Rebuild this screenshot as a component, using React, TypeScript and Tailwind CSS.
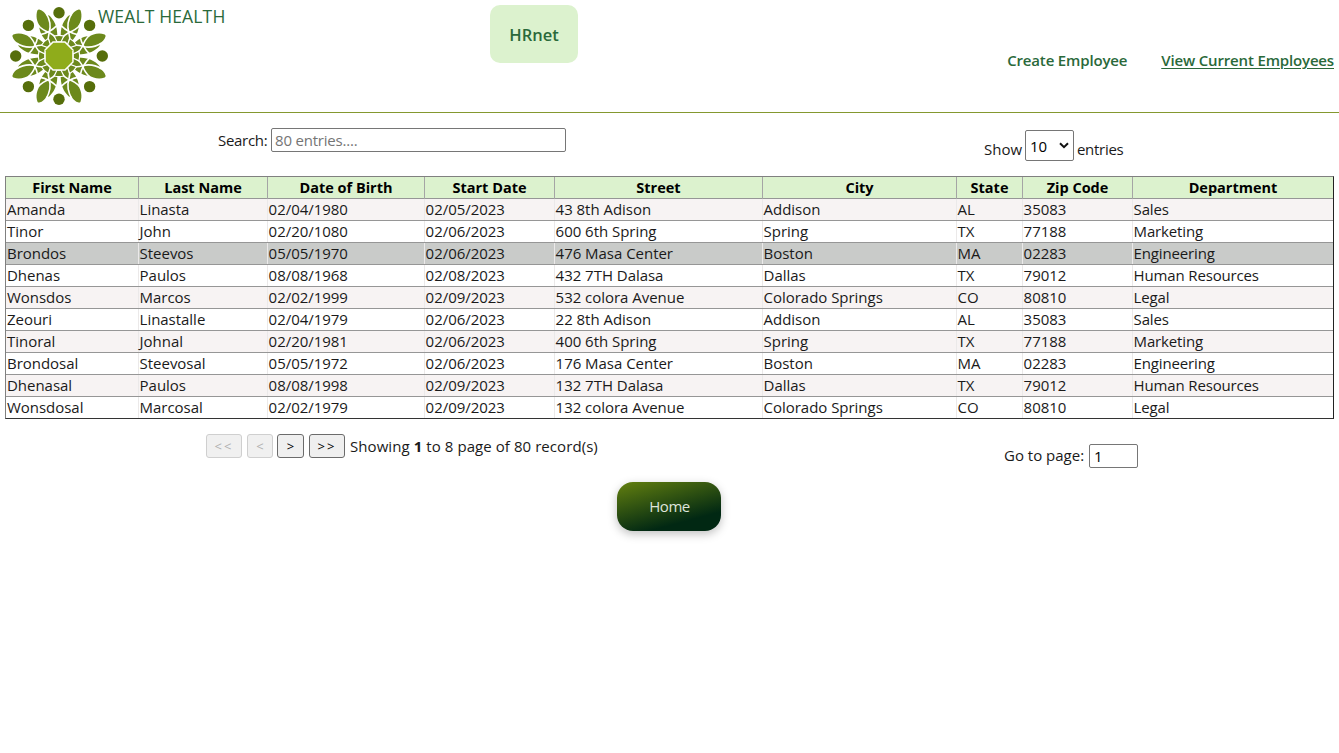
import React from 'react';

const columns = [
  'First Name',
  'Last Name',
  'Date of Birth',
  'Start Date',
  'Street',
  'City',
  'State',
  'Zip Code',
  'Department',
];

const employees = [
  ['Amanda', 'Linasta', '02/04/1980', '02/05/2023', '43 8th Adison', 'Addison', 'AL', '35083', 'Sales'],
  ['Tinor', 'John', '02/20/1080', '02/06/2023', '600 6th Spring', 'Spring', 'TX', '77188', 'Marketing'],
  ['Brondos', 'Steevos', '05/05/1970', '02/06/2023', '476 Masa Center', 'Boston', 'MA', '02283', 'Engineering'],
  ['Dhenas', 'Paulos', '08/08/1968', '02/08/2023', '432 7TH Dalasa', 'Dallas', 'TX', '79012', 'Human Resources'],
  ['Wonsdos', 'Marcos', '02/02/1999', '02/09/2023', '532 colora Avenue', 'Colorado Springs', 'CO', '80810', 'Legal'],
  ['Zeouri', 'Linastalle', '02/04/1979', '02/06/2023', '22 8th Adison', 'Addison', 'AL', '35083', 'Sales'],
  ['Tinoral', 'Johnal', '02/20/1981', '02/06/2023', '400 6th Spring', 'Spring', 'TX', '77188', 'Marketing'],
  ['Brondosal', 'Steevosal', '05/05/1972', '02/06/2023', '176 Masa Center', 'Boston', 'MA', '02283', 'Engineering'],
  ['Dhenasal', 'Paulos', '08/08/1998', '02/09/2023', '132 7TH Dalasa', 'Dallas', 'TX', '79012', 'Human Resources'],
  ['Wonsdosal', 'Marcosal', '02/02/1979', '02/09/2023', '132 colora Avenue', 'Colorado Springs', 'CO', '80810', 'Legal'],
];

const gridCols = 'grid grid-cols-[133px_129px_157px_130px_208px_194px_66px_110px_200px]';

const turns = [0, 45, 90, 135, 180, 225, 270, 315];

function Logo() {
  return (
    <svg className="h-[98px] w-[98px] shrink-0" viewBox="-49 -49 98 98" overflow="visible">
      {turns.map((a, i) => (
        <g key={a} transform={`rotate(${a + 22.5}) scale(${i % 2 === 0 ? 1 : -1} 1)`}>
          <path
            d="M2.4,-50.4 C6.4,-46 7.4,-40 6.2,-34.5 L7.4,-33.5 C8.4,-29 8,-25 6.8,-21 L5,-14 L-5,-14 L-6.8,-21 C-9.4,-28 -9.4,-35 -6.2,-41.5 L-4.2,-41.5 C-3.8,-45 -2.4,-48.4 .4,-50.6 Q1.6,-51.2 2.4,-50.4Z"
            fill="#6c891c"
          />
          <g fill="none" stroke="#fff" strokeWidth="1.6">
            <path d="M-4.4,-44.5 C-5.6,-37 -3.6,-30 0,-25.5 Q3.5,-21.5 4.4,-16" />
            <path d="M7.6,-36.5 C5.8,-31.5 3,-28 0,-25.5 Q-3.5,-21.5 -4.4,-16" />
            <path d="M-10,-29 Q0,-24.8 10,-27" />
          </g>
        </g>
      ))}
      {turns.map((a) => (
        <g key={a} transform={`rotate(${a})`}>
          <circle cx="0" cy="-43.3" r="5.7" fill="#566e0b" />
          <path d="M-4.8,-20 Q0,-21.4 4.8,-20 L2,-14 L-2,-14Z" fill="#6c891c" stroke="#fff" strokeWidth="1.2" />
        </g>
      ))}
      <path
        d="M-5.7,-13.2 H5.7 L13.2,-5.7 V5.7 L5.7,13.2 H-5.7 L-13.2,5.7 V-5.7Z"
        fill="#8fac1b"
        stroke="#fff"
        strokeWidth="3"
        paintOrder="stroke"
      />
    </svg>
  );
}

function PageButton({ label, className, disabled }: { label: string; className: string; disabled?: boolean }) {
  return (
    <button
      disabled={disabled}
      className={`flex h-6 items-center justify-center rounded-[3px] border pt-px text-[13px] ${className} ${
        disabled ? 'border-[#cfcfcf] bg-[#f0f0f0] text-[#b0b0b0]' : 'border-[#6b6b6b] bg-[#efefef] text-black'
      }`}
    >
      {label}
    </button>
  );
}

export default function App() {
  return (
    <div className="h-[753px] overflow-hidden bg-white font-['Open_Sans',sans-serif] text-[15px] leading-5 text-[#1a1a1a]">
      <header className="flex h-[113px] items-start border-b border-[#84982f] text-[#2a693a]">
        <div className="flex w-[490px] pl-[10px] pt-[7px]">
          <Logo />
          <span className="-ml-[10px] -mt-px w-[137px] whitespace-nowrap text-[17.5px] tracking-[0.15px]">WEALT HEALTH</span>
        </div>
        <h1 className="mt-[5px] flex h-[58px] w-[88px] items-center justify-center rounded-[10px] bg-[#dcf2ce] pt-px text-[16.5px] font-semibold">
          HRnet
        </h1>
        <nav className="ml-auto mr-[5px] mt-[50px] flex gap-[34px] whitespace-nowrap text-[15px] font-semibold tracking-[-0.16px]">
          <a>Create Employee</a>
          <a className="underline underline-offset-2">View Current Employees</a>
        </nav>
      </header>

      <main>
        <div className="flex h-[62.5px] items-start">
          <label className="ml-[218px] mt-[15px] flex items-center">
            <span className="w-[53px] whitespace-nowrap tracking-[-0.3px]">Search:</span>
            <input
              placeholder="80 entries...."
              className="h-6 w-[295px] rounded-[2px] border border-[#767676] px-[3px] text-[15px] tracking-[-0.2px] placeholder:text-[#757575]"
            />
          </label>
          <div className="ml-[418px] mt-[17px] flex items-start whitespace-nowrap">
            <span className="w-[41px] pt-[9px]">Show</span>
            <span className="flex h-[31px] w-[49px] items-center rounded-[2px] border border-[#767676] pl-1 text-black">
              10
              <svg className="ml-auto mr-[3px] h-[10px] w-[12px]" viewBox="0 0 12 10" fill="none" stroke="#111" strokeWidth="2">
                <path d="M2 2.2 6 6.2 10 2.2" />
              </svg>
            </span>
            <span className="pl-[3px] pt-[9px] tracking-[-0.3px]">entries</span>
          </div>
        </div>

        <div className="ml-[5px] w-[1329px] border border-[#808080] border-b-[#333] border-r-[#222]" role="table">
          <div className={`${gridCols} h-[21.7px] bg-[#dcf2ce] text-center font-bold leading-[22px] text-black`} role="row">
            {columns.map((c) => (
              <div key={c} role="columnheader" className="border-r border-[#a5a5a5] text-[14.5px] last:border-r-0">
                {c}
              </div>
            ))}
          </div>
          {employees.map((row, i) => (
            <div
              key={i}
              role="row"
              className={`${gridCols} h-[21.95px] border-t border-[#969696] leading-[20px] ${
                i === 2 ? 'bg-[#c9cbc9]' : i % 2 === 0 ? 'bg-[#f7f3f3]' : 'bg-white'
              }`}
            >
              {row.map((cell, j) => (
                <div
                  key={j}
                  role="cell"
                  className="whitespace-nowrap border-r border-[#ebe9e9] pl-[0.6px] tracking-[-0.03px] first:pl-px last:border-r-0 last:tracking-[-0.15px]"
                >
                  {cell}
                </div>
              ))}
            </div>
          ))}
        </div>

        <div className="flex h-[63.3px] items-start whitespace-nowrap">
          <div className="ml-[206px] mt-[15px] flex">
            <PageButton label="<<" className="mr-[5px] w-9 tracking-[2px]" disabled />
            <PageButton label="<" className="mr-1 w-[26px]" disabled />
            <PageButton label=">" className="mr-[5px] w-[27px]" />
            <PageButton label=">>" className="mr-[5px] w-9 tracking-[2px]" />
            <span className="w-[249px] pt-[2px] tracking-[0.07px]">
              Showing <strong>1</strong> to 8 page of 80 record(s)
            </span>
          </div>
          <label className="ml-[405px] mt-[25px] flex items-center">
            <span className="-mt-px w-[85px]">Go to page:</span>
            <input defaultValue="1" className="h-6 w-[49px] rounded-[2px] border border-[#767676] px-1 text-[15px] text-black" />
          </label>
        </div>

        <button className="ml-[617px] flex h-[49px] w-[104px] items-center justify-center rounded-[16px] bg-[linear-gradient(165deg,#63800f_0%,#012813_75%)] pl-px text-[15px] tracking-[-0.5px] text-[#dfe5dc] shadow-[0_3px_10px_rgba(0,0,0,0.25)]">
          Home
        </button>
      </main>
    </div>
  );
}
